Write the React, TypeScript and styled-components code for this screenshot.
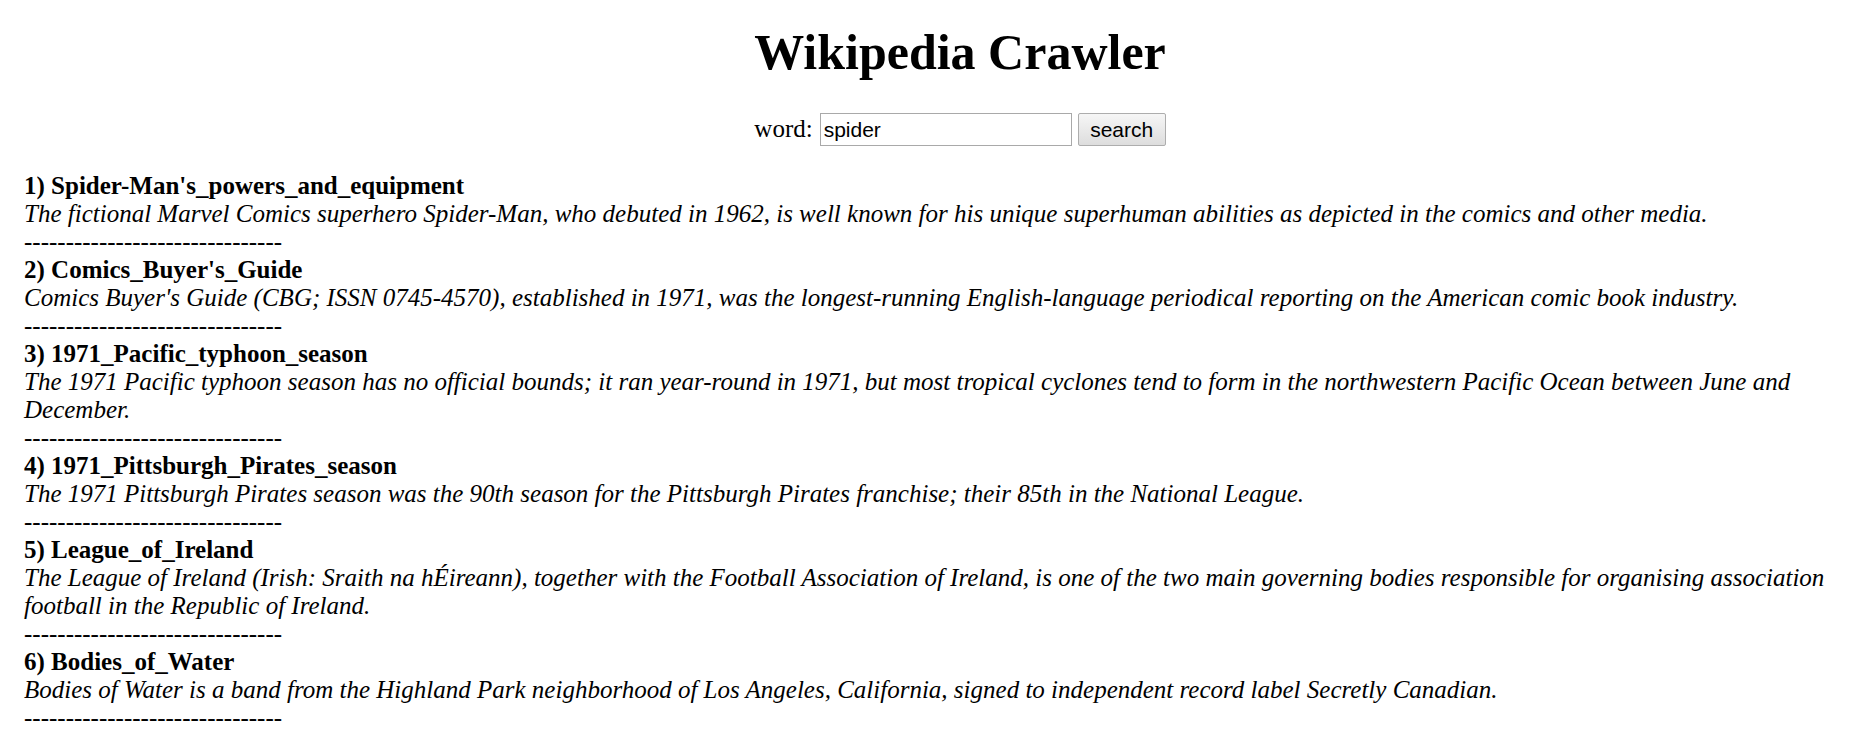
import React from "react";
import styled, { createGlobalStyle } from "styled-components";

const GlobalStyle = createGlobalStyle`
  html, body {
    margin: 0;
    padding: 0;
    background: #ffffff;
  }
  body {
    font-family: "Liberation Serif", "Times New Roman", serif;
    font-size: 25px;
    line-height: 28px;
    color: #000000;
  }
`;

const Page = styled.div`
  padding: 0 24px;
  display: flex;
  flex-direction: column;
`;

const Header = styled.header`
  padding-left: 46px;
  display: flex;
  flex-direction: column;
  align-items: center;
`;

const Title = styled.h1`
  font-size: 50px;
  font-weight: bold;
  line-height: 58px;
  margin: 23px 0 32px;
`;

const SearchForm = styled.form`
  display: flex;
  align-items: center;
  height: 33px;
`;

const Label = styled.label`
  font-size: 25px;
  margin-right: 7px;
  padding-bottom: 2px;
`;

const WordInput = styled.input`
  box-sizing: border-box;
  width: 252px;
  height: 33px;
  font-family: "Liberation Sans", Arial, sans-serif;
  font-size: 21px;
  padding: 1px 3px;
  border: 1px solid #a9a9a9;
  margin: 0 6px 0 0;
  color: #000;
  outline: none;
`;

const SearchButton = styled.button`
  box-sizing: border-box;
  width: 88px;
  height: 33px;
  font-family: "Liberation Sans", Arial, sans-serif;
  font-size: 21px;
  color: #000;
  border: 1px solid #adadad;
  border-radius: 2px;
  background: linear-gradient(#f6f6f6, #dddddd);
  padding: 0;
  cursor: pointer;
`;

const Results = styled.div`
  margin-top: 26px;
  display: flex;
  flex-direction: column;
`;

const Entry = styled.div`
  display: flex;
  flex-direction: column;
`;

const EntryTitle = styled.div`
  font-weight: bold;
`;

const EntryText = styled.div`
  font-style: italic;
`;

const Separator = styled.div``;

const items = [
  {
    name: "Spider-Man's_powers_and_equipment",
    text: "The fictional Marvel Comics superhero Spider-Man, who debuted in 1962, is well known for his unique superhuman abilities as depicted in the comics and other media.",
  },
  {
    name: "Comics_Buyer's_Guide",
    text: "Comics Buyer's Guide (CBG; ISSN 0745-4570), established in 1971, was the longest-running English-language periodical reporting on the American comic book industry.",
  },
  {
    name: "1971_Pacific_typhoon_season",
    text: "The 1971 Pacific typhoon season has no official bounds; it ran year-round in 1971, but most tropical cyclones tend to form in the northwestern Pacific Ocean between June and December.",
  },
  {
    name: "1971_Pittsburgh_Pirates_season",
    text: "The 1971 Pittsburgh Pirates season was the 90th season for the Pittsburgh Pirates franchise; their 85th in the National League.",
  },
  {
    name: "League_of_Ireland",
    text: "The League of Ireland (Irish: Sraith na hÉireann), together with the Football Association of Ireland, is one of the two main governing bodies responsible for organising association football in the Republic of Ireland.",
  },
  {
    name: "Bodies_of_Water",
    text: "Bodies of Water is a band from the Highland Park neighborhood of Los Angeles, California, signed to independent record label Secretly Canadian.",
  },
];

const DASHES = "-".repeat(31);

export default function App() {
  return (
    <>
      <GlobalStyle />
      <Page>
        <Header>
          <Title>Wikipedia Crawler</Title>
          <SearchForm onSubmit={(e) => e.preventDefault()}>
            <Label htmlFor="word">word:</Label>
            <WordInput id="word" type="text" defaultValue="spider" />
            <SearchButton type="submit">search</SearchButton>
          </SearchForm>
        </Header>
        <Results>
          {items.map((it, i) => (
            <Entry key={it.name}>
              <EntryTitle>
                {i + 1}) {it.name}
              </EntryTitle>
              <EntryText>{it.text}</EntryText>
              <Separator>{DASHES}</Separator>
            </Entry>
          ))}
        </Results>
      </Page>
    </>
  );
}
